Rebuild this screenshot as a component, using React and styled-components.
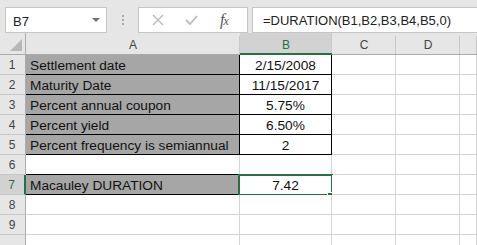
import React from "react";
import styled, { createGlobalStyle } from "styled-components";

const GREEN = "#217346";
const GRID = "#d4d4d4";

const GlobalStyle = createGlobalStyle`
  html, body {
    margin: 0;
    padding: 0;
    background: #ffffff;
    overflow: hidden;
  }
  body {
    font-family: "Liberation Sans", Arial, sans-serif;
  }
`;

const Window = styled.div`
  width: 477px;
  height: 245px;
  display: flex;
  flex-direction: column;
  background: #e6e6e6;
  overflow: hidden;
`;

// formula bar ==============
const Toolbar = styled.div`
  height: 40px;
  box-sizing: border-box;
  padding: 7px 0 0 5px;
  display: flex;
  align-items: flex-start;
`;

const NameBox = styled.div`
  width: 102px;
  height: 26px;
  box-sizing: border-box;
  background: #fff;
  border: 1px solid #c6c6c6;
  display: flex;
  align-items: center;
  justify-content: space-between;
  padding: 2px 6px 0 7px;
  font-size: 13px;
  color: #222;
`;

const Caret = styled.span`
  width: 0;
  height: 0;
  border-left: 4px solid transparent;
  border-right: 4px solid transparent;
  border-top: 4px solid #6f6f6f;
  margin-bottom: 2px;
`;

const Dots = styled.div`
  width: 31px;
  height: 26px;
  display: flex;
  flex-direction: column;
  align-items: center;
  justify-content: center;
  gap: 2px;

  span {
    width: 2px;
    height: 2px;
    background: #a8a8a8;
  }
`;

const FnBox = styled.div`
  width: 110px;
  height: 26px;
  box-sizing: border-box;
  background: #fff;
  border: 1px solid #c6c6c6;
  display: flex;
  align-items: center;
  padding-left: 13px;
  gap: 21px;
`;

const Fx = styled.span`
  font-family: "Liberation Serif", "Times New Roman", serif;
  font-style: italic;
  font-size: 16px;
  color: #555;
  margin-left: 1px;
  letter-spacing: -1px;

  small {
    font-size: 12px;
  }
`;

const FormulaInput = styled.div`
  flex: 1;
  height: 26px;
  margin-left: 4px;
  box-sizing: border-box;
  background: #fff;
  border: 1px solid #c6c6c6;
  border-right: none;
  padding: 3px 0 0 10px;
  font-size: 13px;
  line-height: 20px;
  color: #222;
`;

// sheet ====================
const Sheet = styled.div`
  display: grid;
  grid-template-columns: 26px 214px 92px 64px 64px 1fr;
  grid-template-rows: 22px repeat(10, 20px);
`;

const Corner = styled.div`
  background: #e6e6e6;
  border-right: 1px solid #ababab;
  border-bottom: 1px solid #ababab;
  position: relative;

  &::after {
    content: "";
    position: absolute;
    right: 3px;
    bottom: 3px;
    width: 0;
    height: 0;
    border-left: 12px solid transparent;
    border-bottom: 12px solid #b8b8b8;
  }
`;

const ColHead = styled.div`
  position: relative;
  background: ${({ $active }) => ($active ? "#d2d2d2" : "#e6e6e6")};
  color: ${({ $active }) => ($active ? GREEN : "#444")};
  border-bottom: ${({ $active }) =>
    $active ? `2px solid ${GREEN}` : "1px solid #ababab"};
  font-size: 12px;
  display: flex;
  align-items: center;
  justify-content: center;
  padding-top: 3px;

  &::after {
    content: "";
    position: absolute;
    right: 0;
    top: ${({ $active }) => ($active ? "0" : "3px")};
    bottom: 0;
    width: 1px;
    background: #c8c8c8;
  }
`;

const RowHead = styled.div`
  background: ${({ $active }) => ($active ? "#d2d2d2" : "#e6e6e6")};
  color: ${({ $active }) => ($active ? GREEN : "#444")};
  border-right: ${({ $active }) =>
    $active ? `2px solid ${GREEN}` : "1px solid #ababab"};
  border-bottom: 1px solid #c8c8c8;
  font-size: 12px;
  display: flex;
  align-items: center;
  justify-content: center;
  padding: 1px 1px 0 0;
`;

const Cell = styled.div`
  position: relative;
  box-sizing: border-box;
  background: ${({ $fill }) => ($fill ? "#a6a6a6" : "#fff")};
  border-right: 1px solid ${({ $edgeR }) => ($edgeR ? "#000" : GRID)};
  border-bottom: 1px solid ${({ $edgeB }) => ($edgeB ? "#000" : GRID)};
  font-size: 13.7px;
  line-height: 20px;
  color: #111;
  padding: 1px 4px 0;
  white-space: nowrap;
  text-align: ${({ $center }) => ($center ? "center" : "left")};
`;

const Selection = styled.div`
  position: absolute;
  left: -2px;
  top: -1px;
  width: 95px;
  height: 22px;
  box-sizing: border-box;
  border: 2px solid ${GREEN};
  pointer-events: none;
`;

const Handle = styled.div`
  position: absolute;
  left: 87px;
  top: 16px;
  width: 5px;
  height: 5px;
  background: ${GREEN};
  border: 1px solid #fff;
`;

const rows = [
  { label: "Settlement date", value: "2/15/2008", boxed: true },
  { label: "Maturity Date", value: "11/15/2017", boxed: true },
  { label: "Percent annual coupon", value: "5.75%", boxed: true },
  { label: "Percent yield", value: "6.50%", boxed: true },
  { label: "Percent frequency is semiannual", value: "2", boxed: true },
  { label: "", value: "", gapRow: true },
  { label: "Macauley DURATION", value: "7.42", selected: true },
  { label: "", value: "" },
  { label: "", value: "" },
  { label: "", value: "", clipped: true },
];

export default function App() {
  return (
    <>
      <GlobalStyle />
      <Window>
        <Toolbar>
          <NameBox>
            B7
            <Caret />
          </NameBox>
          <Dots>
            <span />
            <span />
            <span />
          </Dots>
          <FnBox>
            <svg width="12" height="12" viewBox="0 0 12 12">
              <path d="M1 1 L11 11 M11 1 L1 11" stroke="#bcbcbc" strokeWidth="1.4" fill="none" />
            </svg>
            <svg width="13" height="10" viewBox="0 0 13 10">
              <path d="M1 5 L5 9 L12 1" stroke="#bcbcbc" strokeWidth="1.8" fill="none" />
            </svg>
            <Fx>
              f<small>x</small>
            </Fx>
          </FnBox>
          <FormulaInput>=DURATION(B1,B2,B3,B4,B5,0)</FormulaInput>
        </Toolbar>

        <Sheet>
          <Corner />
          <ColHead>A</ColHead>
          <ColHead $active>B</ColHead>
          <ColHead>C</ColHead>
          <ColHead>D</ColHead>
          <ColHead />

          {rows.map((r, i) => (
            <React.Fragment key={i}>
              <RowHead $active={r.selected}>{r.clipped ? "" : i + 1}</RowHead>
              <Cell
                $fill={r.boxed || r.selected}
                $edgeR={r.boxed || r.selected}
                $edgeB={r.boxed || r.gapRow || r.selected}
              >
                {r.label}
              </Cell>
              <Cell $center $edgeR={r.boxed} $edgeB={r.boxed}>
                {r.value}
                {r.selected && (
                  <Selection>
                    <Handle />
                  </Selection>
                )}
              </Cell>
              <Cell />
              <Cell />
              <Cell />
            </React.Fragment>
          ))}
        </Sheet>
      </Window>
    </>
  );
}
